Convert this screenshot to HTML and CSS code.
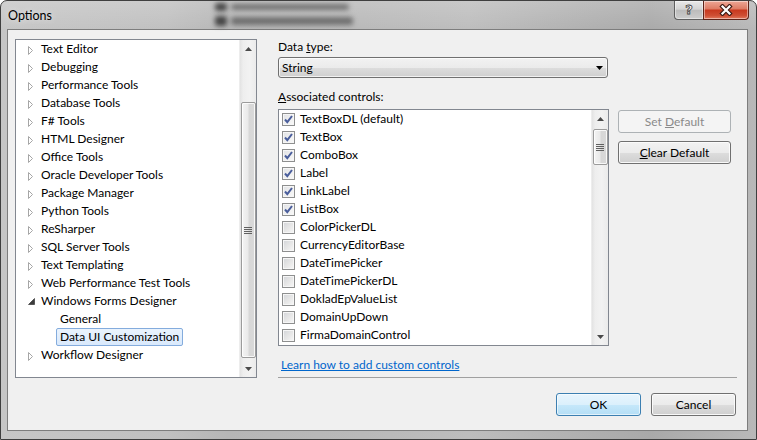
FILE: index.html
```html
<!DOCTYPE html>
<html>
<head>
<meta charset="utf-8">
<title>Options</title>
<link rel="stylesheet" href="styles.css">
</head>
<body>
<div class="window">
  <div class="smudge smudge1"></div>
  <div class="smudge smudge2"></div>
  <div class="smudge smudge3"></div>
  <div class="smudge smudge4"></div>
  <div class="titlebar">
    <span class="title">Options</span>
    <div class="caps">
      <div class="cap help"><span>?</span></div>
      <div class="cap close">
        <svg width="14" height="12" viewBox="0 0 14 12"><path d="M3.5 2.5 L10.5 9.5 M10.5 2.5 L3.5 9.5" stroke="#3b1a14" stroke-width="4.4" stroke-linecap="square" fill="none"/><path d="M3.5 2.5 L10.5 9.5 M10.5 2.5 L3.5 9.5" stroke="#fff" stroke-width="2.2" stroke-linecap="square" fill="none"/></svg>
      </div>
    </div>
  </div>
  <div class="client">
    <div class="top">
      <div class="tree">
        <ul class="tree-list">
          <li class="node"><span class="exp"><svg width="6" height="9" viewBox="0 0 6 9"><polygon points="0.5,0.5 4.5,4.5 0.5,8.5" fill="#fff" stroke="#a6a6a6"/></svg></span><span class="label">Text Editor</span></li>
          <li class="node"><span class="exp"><svg width="6" height="9" viewBox="0 0 6 9"><polygon points="0.5,0.5 4.5,4.5 0.5,8.5" fill="#fff" stroke="#a6a6a6"/></svg></span><span class="label">Debugging</span></li>
          <li class="node"><span class="exp"><svg width="6" height="9" viewBox="0 0 6 9"><polygon points="0.5,0.5 4.5,4.5 0.5,8.5" fill="#fff" stroke="#a6a6a6"/></svg></span><span class="label">Performance Tools</span></li>
          <li class="node"><span class="exp"><svg width="6" height="9" viewBox="0 0 6 9"><polygon points="0.5,0.5 4.5,4.5 0.5,8.5" fill="#fff" stroke="#a6a6a6"/></svg></span><span class="label">Database Tools</span></li>
          <li class="node"><span class="exp"><svg width="6" height="9" viewBox="0 0 6 9"><polygon points="0.5,0.5 4.5,4.5 0.5,8.5" fill="#fff" stroke="#a6a6a6"/></svg></span><span class="label">F# Tools</span></li>
          <li class="node"><span class="exp"><svg width="6" height="9" viewBox="0 0 6 9"><polygon points="0.5,0.5 4.5,4.5 0.5,8.5" fill="#fff" stroke="#a6a6a6"/></svg></span><span class="label">HTML Designer</span></li>
          <li class="node"><span class="exp"><svg width="6" height="9" viewBox="0 0 6 9"><polygon points="0.5,0.5 4.5,4.5 0.5,8.5" fill="#fff" stroke="#a6a6a6"/></svg></span><span class="label">Office Tools</span></li>
          <li class="node"><span class="exp"><svg width="6" height="9" viewBox="0 0 6 9"><polygon points="0.5,0.5 4.5,4.5 0.5,8.5" fill="#fff" stroke="#a6a6a6"/></svg></span><span class="label">Oracle Developer Tools</span></li>
          <li class="node"><span class="exp"><svg width="6" height="9" viewBox="0 0 6 9"><polygon points="0.5,0.5 4.5,4.5 0.5,8.5" fill="#fff" stroke="#a6a6a6"/></svg></span><span class="label">Package Manager</span></li>
          <li class="node"><span class="exp"><svg width="6" height="9" viewBox="0 0 6 9"><polygon points="0.5,0.5 4.5,4.5 0.5,8.5" fill="#fff" stroke="#a6a6a6"/></svg></span><span class="label">Python Tools</span></li>
          <li class="node"><span class="exp"><svg width="6" height="9" viewBox="0 0 6 9"><polygon points="0.5,0.5 4.5,4.5 0.5,8.5" fill="#fff" stroke="#a6a6a6"/></svg></span><span class="label">ReSharper</span></li>
          <li class="node"><span class="exp"><svg width="6" height="9" viewBox="0 0 6 9"><polygon points="0.5,0.5 4.5,4.5 0.5,8.5" fill="#fff" stroke="#a6a6a6"/></svg></span><span class="label">SQL Server Tools</span></li>
          <li class="node"><span class="exp"><svg width="6" height="9" viewBox="0 0 6 9"><polygon points="0.5,0.5 4.5,4.5 0.5,8.5" fill="#fff" stroke="#a6a6a6"/></svg></span><span class="label">Text Templating</span></li>
          <li class="node"><span class="exp"><svg width="6" height="9" viewBox="0 0 6 9"><polygon points="0.5,0.5 4.5,4.5 0.5,8.5" fill="#fff" stroke="#a6a6a6"/></svg></span><span class="label">Web Performance Test Tools</span></li>
          <li class="node"><span class="exp open"><svg width="7" height="7" viewBox="0 0 7 7"><polygon points="6.5,0.5 6.5,6.5 0.5,6.5" fill="#3c3c3c" stroke="#262626" stroke-width="0.6"/></svg></span><span class="label">Windows Forms Designer</span></li>
          <li class="node child"><span class="label">General</span></li>
          <li class="node child"><span class="label selected">Data UI Customization</span></li>
          <li class="node"><span class="exp"><svg width="6" height="9" viewBox="0 0 6 9"><polygon points="0.5,0.5 4.5,4.5 0.5,8.5" fill="#fff" stroke="#a6a6a6"/></svg></span><span class="label">Workflow Designer</span></li>
        </ul>
        <div class="vscroll">
          <div class="sbtn"><svg width="7" height="4" viewBox="0 0 7 4"><polygon points="0,4 3.5,0 7,4" fill="#4a4a4a"/></svg></div>
          <div class="track">
            <div class="thumb tree-thumb"><svg width="8" height="7" viewBox="0 0 8 7"><rect x="0" y="0" width="8" height="1" fill="#606060"/><rect x="0" y="2" width="8" height="1" fill="#606060"/><rect x="0" y="4" width="8" height="1" fill="#606060"/><rect x="0" y="6" width="8" height="1" fill="#606060"/></svg></div>
          </div>
          <div class="sbtn"><svg width="7" height="4" viewBox="0 0 7 4"><polygon points="0,0 7,0 3.5,4" fill="#4a4a4a"/></svg></div>
        </div>
      </div>
      <div class="panel">
        <div class="lbl">Data <u>t</u>ype:</div>
        <div class="combo"><span>String</span><svg width="7" height="4" viewBox="0 0 7 4"><polygon points="0,0 7,0 3.5,4" fill="#000"/></svg></div>
        <div class="lbl lbl2"><u>A</u>ssociated controls:</div>
        <div class="assoc">
          <div class="listbox">
            <ul class="checks">
              <li class="ck"><span class="cb on"><svg width="11" height="11" viewBox="0 0 11 11"><path d="M2 5.5 L4.3 8.2 L9 2" stroke="#4a5e9c" stroke-width="2" fill="none"/></svg></span><span>TextBoxDL (default)</span></li>
              <li class="ck"><span class="cb on"><svg width="11" height="11" viewBox="0 0 11 11"><path d="M2 5.5 L4.3 8.2 L9 2" stroke="#4a5e9c" stroke-width="2" fill="none"/></svg></span><span>TextBox</span></li>
              <li class="ck"><span class="cb on"><svg width="11" height="11" viewBox="0 0 11 11"><path d="M2 5.5 L4.3 8.2 L9 2" stroke="#4a5e9c" stroke-width="2" fill="none"/></svg></span><span>ComboBox</span></li>
              <li class="ck"><span class="cb on"><svg width="11" height="11" viewBox="0 0 11 11"><path d="M2 5.5 L4.3 8.2 L9 2" stroke="#4a5e9c" stroke-width="2" fill="none"/></svg></span><span>Label</span></li>
              <li class="ck"><span class="cb on"><svg width="11" height="11" viewBox="0 0 11 11"><path d="M2 5.5 L4.3 8.2 L9 2" stroke="#4a5e9c" stroke-width="2" fill="none"/></svg></span><span>LinkLabel</span></li>
              <li class="ck"><span class="cb on"><svg width="11" height="11" viewBox="0 0 11 11"><path d="M2 5.5 L4.3 8.2 L9 2" stroke="#4a5e9c" stroke-width="2" fill="none"/></svg></span><span>ListBox</span></li>
              <li class="ck"><span class="cb"></span><span>ColorPickerDL</span></li>
              <li class="ck"><span class="cb"></span><span>CurrencyEditorBase</span></li>
              <li class="ck"><span class="cb"></span><span>DateTimePicker</span></li>
              <li class="ck"><span class="cb"></span><span>DateTimePickerDL</span></li>
              <li class="ck"><span class="cb"></span><span>DokladEpValueList</span></li>
              <li class="ck"><span class="cb"></span><span>DomainUpDown</span></li>
              <li class="ck"><span class="cb"></span><span>FirmaDomainControl</span></li>
            </ul>
            <div class="vscroll">
              <div class="sbtn"><svg width="7" height="4" viewBox="0 0 7 4"><polygon points="0,4 3.5,0 7,4" fill="#4a4a4a"/></svg></div>
              <div class="track">
                <div class="thumb list-thumb"><svg width="8" height="7" viewBox="0 0 8 7"><rect x="0" y="0" width="8" height="1" fill="#606060"/><rect x="0" y="2" width="8" height="1" fill="#606060"/><rect x="0" y="4" width="8" height="1" fill="#606060"/><rect x="0" y="6" width="8" height="1" fill="#606060"/></svg></div>
              </div>
              <div class="sbtn"><svg width="7" height="4" viewBox="0 0 7 4"><polygon points="0,0 7,0 3.5,4" fill="#4a4a4a"/></svg></div>
            </div>
          </div>
          <div class="side-btns">
            <div class="btn disabled"><span>Set <u>D</u>efault</span></div>
            <div class="btn"><span><u>C</u>lear Default</span></div>
          </div>
        </div>
        <a class="link">Learn how to add custom controls</a>
        <div class="sep"></div>
      </div>
    </div>
    <div class="bottom">
      <div class="btn wide default">OK</div>
      <div class="btn wide">Cancel</div>
    </div>
  </div>
</div>
</body>
</html>
```

FILE: styles.css
```css
* { box-sizing: border-box; }
html, body { margin: 0; padding: 0; }
body {
  width: 757px;
  height: 440px;
  overflow: hidden;
  background: #fff;
  font-family: Lato, "Liberation Sans", sans-serif;
  font-size: 12px;
  color: #000;
}
.window {
  position: relative;
  width: 757px;
  height: 440px;
  border: 1px solid #3f3f3f;
  border-radius: 7px 7px 0 0;
  padding: 0 8px 8px 6px;
  display: flex;
  flex-direction: column;
  overflow: hidden;
  background:
    linear-gradient(to bottom, rgba(255,255,255,0.18), rgba(255,255,255,0) 30px),
    linear-gradient(to right, #c6c6c6 0%, #c0c0c0 22%, #b6b6b6 30%, #b9b9b9 48%, #bdbdbd 62%, #b1b1b1 76%, #a9a9a9 86%, #b8b8b8 100%);
}
.smudge {
  position: absolute;
  background: rgba(60, 60, 60, 0.6);
  filter: blur(2.5px);
  border-radius: 3px;
}
.smudge1 { left: 230px; top: 3px; width: 118px; height: 6px; }
.smudge2 { left: 230px; top: 16px; width: 122px; height: 8px; }
.smudge3 { left: 214px; top: 2px; width: 12px; height: 8px; background: rgba(30,30,30,0.75); }
.smudge4 { left: 214px; top: 15px; width: 12px; height: 10px; background: rgba(30,30,30,0.75); }

.titlebar {
  position: relative;
  height: 28px;
  display: flex;
  align-items: flex-start;
}
.title {
  margin-top: 7px;
  padding-left: 1px;
  line-height: 15px;
  font-size: 12.5px;
  color: #000;
  text-shadow: 0 0 6px rgba(255,255,255,0.7);
}
.caps {
  margin-left: auto;
  margin-right: -1px;
  display: flex;
}
.cap {
  height: 19px;
  display: flex;
  align-items: center;
  justify-content: center;
  border: 1px solid #5f5f5f;
  border-top: none;
  box-shadow: inset 0 0 0 1px rgba(255,255,255,0.45);
}
.help {
  width: 29px;
  border-right: none;
  border-radius: 0 0 0 4px;
  background: linear-gradient(to bottom, #e9e9e9 0%, #d4d4d4 45%, #bcbcbc 52%, #cdcdcd 100%);
}
.help span {
  font-family: "DejaVu Sans", sans-serif;
  font-weight: bold;
  font-size: 13px;
  line-height: 13px;
  color: #fff;
  -webkit-text-stroke: 0.8px #404040;
  margin-top: -1px;
}
.close {
  width: 46px;
  border-color: #5e2318;
  border-radius: 0 0 4px 0;
  background: linear-gradient(to bottom, #eda796 0%, #de7d66 42%, #c8391f 52%, #cf4e33 80%, #e27a5e 100%);
}
.close svg { display: block; margin-top: -1px; }

.client {
  flex: 1;
  border: 1px solid #7d7d7d;
  background: #f0f0f0;
  display: flex;
  flex-direction: column;
}
.top {
  display: flex;
  align-items: flex-start;
  padding: 9px 0 0 7px;
}

/* tree */
.tree {
  width: 242px;
  height: 339px;
  border: 1px solid #828790;
  background: #fff;
  display: flex;
}
.tree-list {
  flex: 1;
  list-style: none;
  margin: 0;
  padding: 0;
}
.node {
  height: 18px;
  display: flex;
  align-items: center;
  padding-left: 12px;
  white-space: nowrap;
}
.exp {
  width: 9px;
  display: flex;
  align-items: center;
  margin-top: 2px;
}
.exp svg { display: block; }
.exp.open { margin-top: 0; }
.node.child { padding-left: 40px; }
.label {
  display: inline-block;
  height: 18px;
  line-height: 16px;
  padding: 0 3px;
  border: 1px solid transparent;
  border-radius: 2px;
}
.label.selected {
  border-color: #84acdd;
  background: linear-gradient(to bottom, #eaf3fd 0%, #d9e9fc 100%);
}

/* scrollbars */
.vscroll {
  width: 17px;
  display: flex;
  flex-direction: column;
  background: linear-gradient(to right, #e3e3e3 0%, #eeeeee 20%, #f2f2f2 60%, #ebebeb 100%);
  border-left: 1px solid #ededed;
}
.sbtn {
  height: 17px;
  display: flex;
  align-items: center;
  justify-content: center;
}
.sbtn svg { display: block; }
.track {
  flex: 1;
  display: flex;
  flex-direction: column;
  align-items: center;
}
.thumb {
  width: 15px;
  border: 1px solid #9b9b9b;
  border-radius: 2px;
  background: linear-gradient(to right, #f4f4f4 0%, #e9e9e9 45%, #d7d7d7 55%, #d9d9d9 100%);
  box-shadow: inset 0 0 0 1px rgba(255,255,255,0.8);
  display: flex;
  align-items: center;
  justify-content: center;
}
.thumb svg { display: block; }
.tree-thumb { margin-top: 45px; height: 256px; }
.list-thumb { margin-top: 2px; height: 36px; }

/* right panel */
.panel {
  margin-left: 21px;
  width: 459px;
  display: flex;
  flex-direction: column;
  align-items: flex-start;
}
.lbl {
  line-height: 15px;
  height: 15px;
}
.lbl2 { margin-top: 11px; }
.combo {
  margin-top: 3px;
  width: 330px;
  height: 21px;
  border: 1px solid #707070;
  border-radius: 3px;
  background: linear-gradient(to bottom, #f2f2f2 0%, #ebebeb 50%, #dddddd 51%, #cfcfcf 100%);
  box-shadow: inset 0 0 0 1px rgba(255,255,255,0.7);
  display: flex;
  align-items: center;
  justify-content: space-between;
  padding: 0 4px 0 3px;
}
.combo svg { display: block; }
.assoc {
  margin-top: 5px;
  display: flex;
  align-items: flex-start;
}
.listbox {
  width: 331px;
  height: 237px;
  border: 1px solid #828790;
  background: #fff;
  display: flex;
}
.checks {
  flex: 1;
  list-style: none;
  margin: 0;
  padding: 0 0 0 3px;
}
.ck {
  height: 18px;
  display: flex;
  align-items: center;
  white-space: nowrap;
}
.ck span:last-child { line-height: 15px; margin-top: -1px; }
.cb {
  width: 13px;
  height: 13px;
  margin-right: 5px;
  border: 1px solid #8e8f8f;
  background: linear-gradient(135deg, #d2d4d8 0%, #e6e6e6 50%, #f7f7f7 100%);
  box-shadow: inset 0 0 0 1px #f6f6f6;
  display: flex;
  align-items: center;
  justify-content: center;
}
.cb.on {
  background: linear-gradient(135deg, #e0e2e6 0%, #eeeeee 50%, #fafafa 100%);
}
.cb svg { display: block; }
.side-btns {
  margin-left: 9px;
  margin-top: 1px;
  display: flex;
  flex-direction: column;
  gap: 8px;
}
.btn {
  width: 113px;
  height: 23px;
  border: 1px solid #707070;
  border-radius: 3px;
  background: linear-gradient(to bottom, #f2f2f2 0%, #ebebeb 50%, #dddddd 51%, #cfcfcf 100%);
  box-shadow: inset 0 0 0 1px rgba(252,252,252,0.9);
  display: flex;
  align-items: center;
  justify-content: center;
  line-height: 15px;
}
.btn.disabled {
  border-color: #adb2b5;
  background: #f4f4f4;
  box-shadow: none;
  color: #8a8a8a;
}
.btn.wide { width: 85px; }
.btn.default {
  border-color: #3c7fb1;
  background: linear-gradient(to bottom, #e8f5fd 0%, #dbf0fc 50%, #c6e8fa 51%, #b4def6 100%);
  box-shadow: inset 0 0 0 1px rgba(255,255,255,0.6);
}
.link {
  margin-top: 11px;
  line-height: 15px;
  height: 15px;
  color: #0066cc;
  text-decoration: underline;
  padding-left: 3px;
}
.sep {
  margin-top: 5px;
  align-self: stretch;
  height: 1px;
  background: #a0a0a0;
}
.bottom {
  display: flex;
  justify-content: flex-end;
  gap: 10px;
  padding: 15px 11px 0 0;
}
```
